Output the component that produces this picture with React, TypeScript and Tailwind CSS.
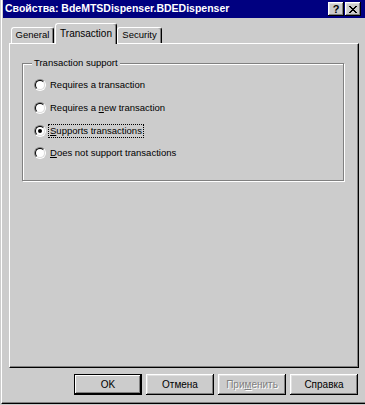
import type { ReactNode } from "react";

const bevel = "shadow-[inset_-1px_-1px_#000,inset_1px_1px_#fff,inset_-2px_-2px_#808080,inset_2px_2px_#dfdfdf]";

function CaptionButton({ children }: { children: ReactNode }) {
  return (
    <div className={`flex h-[14px] w-[16px] items-center justify-center bg-[#cccccc] ${bevel}`}>
      {children}
    </div>
  );
}

function Tab({ label, selected, width }: { label: string; selected?: boolean; width: string }) {
  return (
    <div
      className={`relative flex items-center justify-center rounded-t-[3px] border-l border-t border-r border-l-white border-t-white border-r-black bg-[#cccccc] shadow-[inset_-1px_0_#808080] ${width} ${
        selected ? "z-10 -mb-px h-[21px] pb-[2px]" : "h-[16px]"
      }`}
    >
      <span className={selected ? "text-[10px]" : "text-[9.5px]"}>{label}</span>
    </div>
  );
}

function Radio({ checked }: { checked?: boolean }) {
  return (
    <div className="flex h-[12px] w-[12px] shrink-0 items-center justify-center rounded-full border border-t-[#808080] border-l-[#808080] border-r-white border-b-white">
      <div className="flex h-[10px] w-[10px] items-center justify-center rounded-full border border-t-black border-l-black border-r-[#dfdfdf] border-b-[#dfdfdf] bg-white">
        {checked && <div className="h-[4px] w-[4px] rounded-full bg-black" />}
      </div>
    </div>
  );
}

function Option({ children, checked, focused }: { children: ReactNode; checked?: boolean; focused?: boolean }) {
  return (
    <div className="flex h-[22.7px] items-center gap-[2px]">
      <Radio checked={checked} />
      <span
        className={`border px-[1px] leading-[12px] ${focused ? "border-dotted border-black" : "border-transparent"}`}
      >
        {children}
      </span>
    </div>
  );
}

function Button({ children, isDefault, disabled }: { children: ReactNode; isDefault?: boolean; disabled?: boolean }) {
  return (
    <div
      className={`flex h-[21px] w-[68px] items-center justify-center bg-[#cccccc] ${
        isDefault
          ? "border border-black shadow-[inset_-1px_-1px_#000,inset_1px_1px_#fff,inset_-2px_-2px_#808080]"
          : bevel
      }`}
    >
      <span
        className={`text-[10px] ${disabled ? "text-[#808080] [text-shadow:1px_1px_#fff]" : "text-black"}`}
      >
        {children}
      </span>
    </div>
  );
}

export default function App() {
  return (
    <div className="h-[405px] w-[365px] overflow-hidden bg-[#cccccc] font-['Liberation_Sans',Arial,sans-serif] text-black">
      <div className="ml-px flex h-[404px] flex-col border-b border-l border-b-black border-l-white">
        <div className="flex flex-1 flex-col border-b border-b-[#808080]">
          {/* title bar */}
          <div className="ml-px flex h-[18px] items-center justify-between bg-[#000080] pl-[2px] pr-[4px]">
            <span className="text-[10.5px] font-bold text-white">
              Свойства: BdeMTSDispenser.BDEDispenser
            </span>
            <div className="flex items-center">
              <CaptionButton>
                <span className="text-[11px] font-bold leading-none">?</span>
              </CaptionButton>
              <div className="w-px" />
              <CaptionButton>
                <svg width="8" height="7" viewBox="0 0 8 7" shapeRendering="crispEdges">
                  <path d="M0 0h2v1h-2zM6 0h2v1h-2zM1 1h2v1h-2zM5 1h2v1h-2zM2 2h4v1h-4zM3 3h2v1h-2zM2 4h4v1h-4zM1 5h2v1h-2zM5 5h2v1h-2zM0 6h2v1h-2zM6 6h2v1h-2z" fill="#000" />
                </svg>
              </CaptionButton>
            </div>
          </div>

          <div className="flex flex-col pl-[7px] pr-[6px] pt-[6px]">
            {/* tabs */}
            <div className="flex h-[19px] items-end pl-[2px]">
              <Tab label="General" width="w-[43px]" />
              <div className="w-px" />
              <Tab label="Transaction" width="w-[62px]" selected />
              <Tab label="Security" width="w-[45px]" />
            </div>

            {/* tab panel */}
            <div className="h-[325px] border-l border-t border-r border-b border-l-white border-t-white border-r-black border-b-black shadow-[inset_-1px_-1px_#808080] pl-[12px] pt-[19px]">
              <div className="relative h-[118px] w-[322px] border border-[#808080] shadow-[inset_1px_1px_#fff,1px_1px_#fff]">
                <span className="absolute -top-[7px] left-[9px] bg-[#cccccc] px-[2px] text-[9.5px] leading-[12px]">
                  Transaction support
                </span>
                <div className="flex flex-col pl-[11px] pt-[10px] text-[9.5px]">
                  <Option>Requires a transaction</Option>
                  <Option>
                    Requires a <span className="underline">n</span>ew transaction
                  </Option>
                  <Option checked focused>
                    <span className="underline">S</span>upports transactions
                  </Option>
                  <Option>
                    <span className="underline">D</span>oes not support transactions
                  </Option>
                </div>
              </div>
            </div>

            {/* buttons */}
            <div className="mt-[6px] flex justify-end gap-[4px] pr-px">
              <Button isDefault>OK</Button>
              <Button>Отмена</Button>
              <Button disabled>
                При<span className="underline">м</span>енить
              </Button>
              <Button>Справка</Button>
            </div>
          </div>
        </div>
      </div>
    </div>
  );
}
